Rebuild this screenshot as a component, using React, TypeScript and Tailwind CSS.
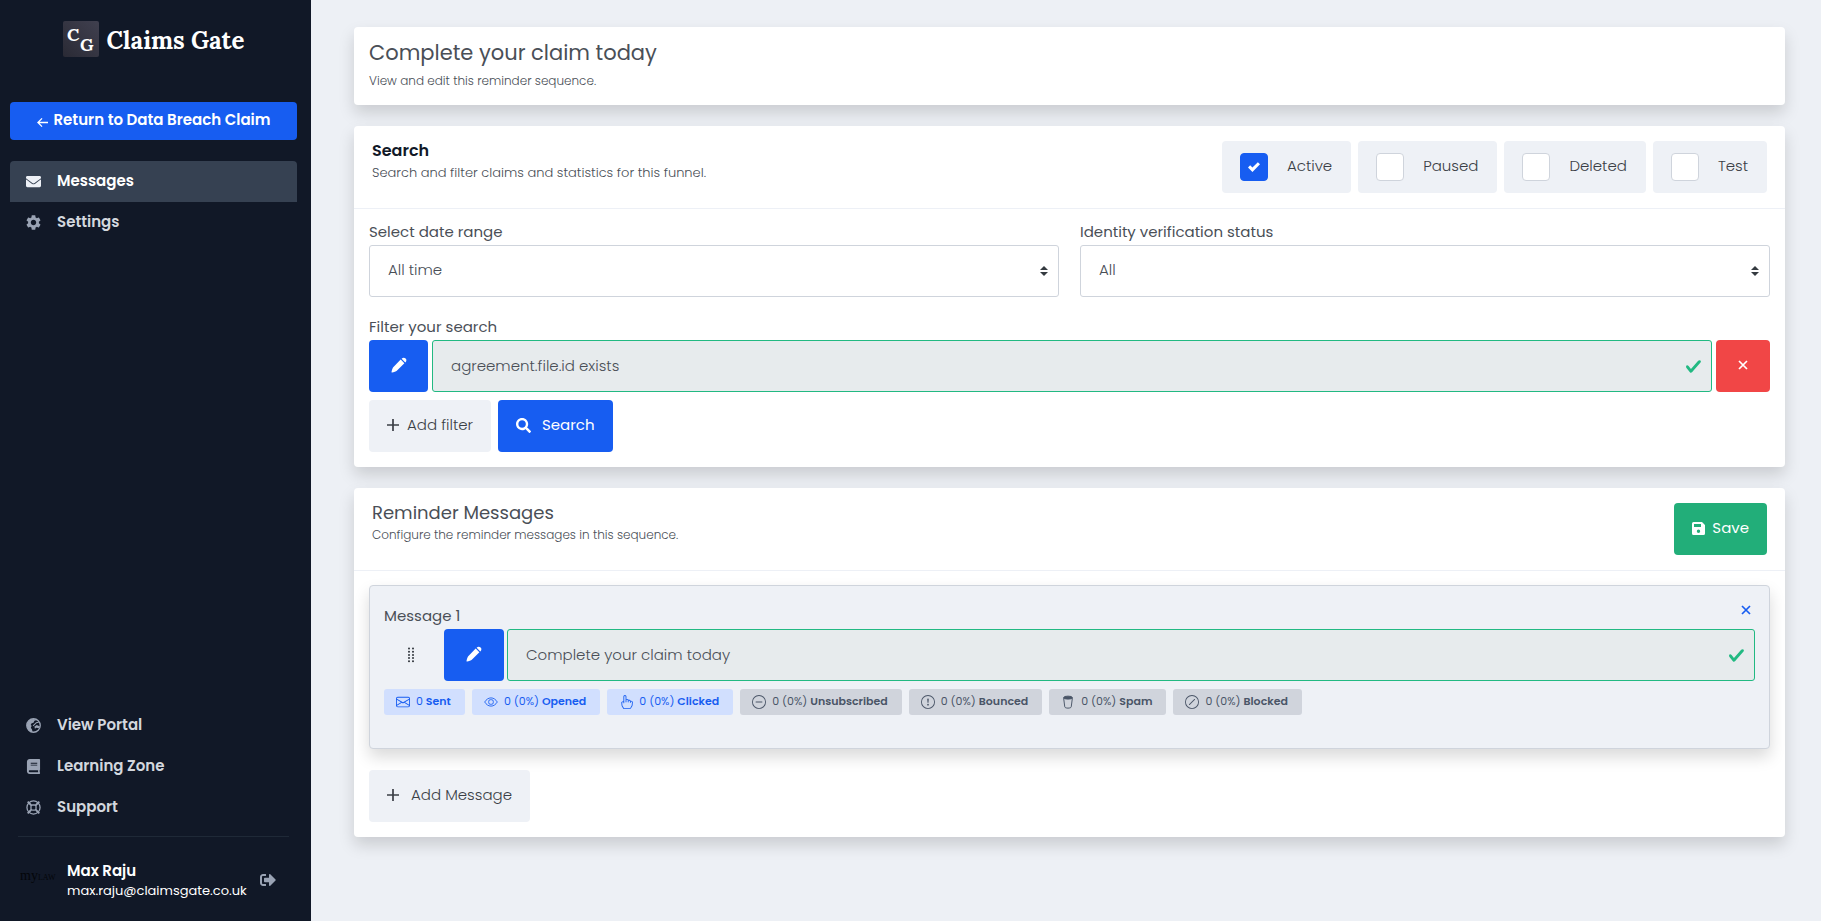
import React, { ReactNode } from 'react';
import { FaSearch, FaSignOutAlt, FaEnvelope, FaBook } from 'react-icons/fa';
import { BsEnvelope, BsHandIndex, BsDashCircle, BsExclamationCircle, BsSlashCircle } from 'react-icons/bs';

const btn = 'inline-flex h-[52px] items-center justify-center rounded pb-[2px] text-[15px]';
const card = 'rounded bg-white shadow-[0_8px_16px_rgba(0,0,0,0.15)]';

const topLinks = [
  { label: 'Messages', icon: FaEnvelope, active: true },
  { label: 'Settings', icon: Gear, active: false },
];

const bottomLinks = [
  { label: 'View Portal', icon: Globe },
  { label: 'Learning Zone', icon: FaBook },
  { label: 'Support', icon: LifeRing },
];

const statuses = [
  { id: 'active', label: 'Active', checked: true },
  { id: 'paused', label: 'Paused', checked: false },
  { id: 'deleted', label: 'Deleted', checked: false },
  { id: 'test', label: 'Test', checked: false },
];

const stats = [
  { icon: BsEnvelope, value: '0', label: 'Sent', primary: true },
  { icon: Eye, value: '0 (0%)', label: 'Opened', primary: true },
  { icon: BsHandIndex, value: '0 (0%)', label: 'Clicked', primary: true },
  { icon: BsDashCircle, value: '0 (0%)', label: 'Unsubscribed', primary: false },
  { icon: BsExclamationCircle, value: '0 (0%)', label: 'Bounced', primary: false },
  { icon: Bin, value: '0 (0%)', label: 'Spam', primary: false },
  { icon: BsSlashCircle, value: '0 (0%)', label: 'Blocked', primary: false },
];

export default function App() {
  return (
    <div className="flex min-h-screen bg-[#edf0f5] font-['Poppins',Inter,sans-serif] text-[15px] text-[#4a4f57]">
      <Sidebar />
      <main className="flex min-w-0 flex-1 flex-col gap-[21px] pt-[27px] pr-9 pb-12 pl-[43px]">
        <section className={`${card} px-[15px] pt-3 pb-[15px]`}>
          <h1 className="text-[21px] leading-7">Complete your claim today</h1>
          <p className="mt-1 text-xs leading-[19px] font-light">View and edit this reminder sequence.</p>
        </section>
        <SearchCard />
        <MessagesCard />
      </main>
    </div>
  );
}

function Sidebar() {
  return (
    <aside className="flex w-[311px] shrink-0 flex-col bg-[#111827] px-[10px]">
      <div className="mt-[21px] flex h-9 items-center justify-center gap-2 pr-1">
        <Logo />
        <span className="pt-[3px] font-['Lora','DejaVu_Serif',serif] text-2xl font-bold text-white">Claims Gate</span>
      </div>
      <a href="#" className="mt-[45px] mr-1 flex h-[38px] items-center justify-center gap-[6px] rounded bg-[#175df1] pb-px text-[15px] font-semibold text-white">
        <ArrowLeft />
        Return to Data Breach Claim
      </a>
      <nav className="mt-[21px] mr-1">
        {topLinks.map((l) => (
          <a key={l.label} href="#" className={`flex h-[41px] items-center gap-4 rounded-t px-4 font-semibold ${l.active ? 'bg-[#364152] text-white' : 'text-[#d3d7de]'}`}>
            <l.icon className={`size-[15px] ${l.active ? 'text-[#edf0f6]' : 'text-[#9aa3b4]'}`} />
            {l.label}
          </a>
        ))}
      </nav>
      <nav className="mt-auto mr-1">
        {bottomLinks.map((l) => (
          <a key={l.label} href="#" className="flex h-[41px] items-center gap-4 px-4 font-semibold text-[#d3d7de]">
            <l.icon className="size-[15px] text-[#9aa3b4]" />
            {l.label}
          </a>
        ))}
      </nav>
      <div className="mx-2 mt-2 mr-3 border-t border-[#1f2937]" />
      <div className="flex h-[84px] items-center pt-[2px] pl-[10px]">
        <span className="w-[47px] pb-2 font-['Liberation_Serif',serif] text-sm text-[#04060a]">my<span className="text-[8px]">LAW</span></span>
        <div className="flex-1">
          <p className="leading-[21px] font-semibold text-white">Max Raju</p>
          <p className="text-[13px] leading-5 text-white">max.raju@claimsgate.co.uk</p>
        </div>
        <button aria-label="Sign out" className="mr-[25px] text-[#9aa3b4]"><FaSignOutAlt className="size-4" /></button>
      </div>
    </aside>
  );
}

function SearchCard() {
  return (
    <section className={card}>
      <div className="flex items-start justify-between border-b border-[#edf0f6] px-[18px] py-[15px]">
        <div>
          <h2 className="text-base leading-5 font-semibold text-[#111827]">Search</h2>
          <p className="text-[13px] leading-6 font-light">Search and filter claims and statistics for this funnel.</p>
        </div>
        <div className="flex gap-[7px]">
          {statuses.map((s) => (
            <label key={s.id} htmlFor={s.id} className="flex h-[52px] items-center gap-[19px] rounded bg-[#eef1f6] pr-[19px] pl-[18px] font-light text-[#3b3f46]">
              <span className="grid size-7">
                <input id={s.id} type="checkbox" defaultChecked={s.checked} className="peer col-start-1 row-start-1 size-7 appearance-none rounded border border-[#cfd4dc] bg-white checked:border-[#175df1] checked:bg-[#175df1]" />
                <svg viewBox="0 0 8 8" fill="currentColor" className="pointer-events-none col-start-1 row-start-1 hidden size-3 place-self-center text-white peer-checked:block">
                  <path d="M6.564.75l-3.59 3.612-1.538-1.55L0 4.26l2.974 2.99L8 2.193z" />
                </svg>
              </span>
              <span className="pb-[2px]">{s.label}</span>
            </label>
          ))}
        </div>
      </div>
      <div className="px-[15px] pt-3 pb-[15px]">
        <div className="grid grid-cols-2 gap-[21px]">
          <SelectField id="range" label="Select date range" value="All time" />
          <SelectField id="identity" label="Identity verification status" value="All" />
        </div>
        <FieldLabel id="filter" className="mt-[19px]">Filter your search</FieldLabel>
        <div className="flex gap-1">
          <button aria-label="Edit filter" className={`${btn} w-[59px] bg-[#175df1] text-white`}><Pencil /></button>
          <ValidInput id="filter" value="agreement.file.id exists" />
          <button aria-label="Remove filter" className={`${btn} w-[54px] bg-[#f14646] text-white`}><Cross /></button>
        </div>
        <div className="mt-2 flex gap-[7px]">
          <button className={`${btn} gap-2 bg-[#eef1f6] px-[18px] font-light text-[#3b3f46]`}><Plus />Add filter</button>
          <button className={`${btn} gap-[11px] bg-[#175df1] px-[18px] text-white`}><FaSearch className="size-[15px]" />Search</button>
        </div>
      </div>
    </section>
  );
}

function MessagesCard() {
  return (
    <section className={card}>
      <div className="flex items-start justify-between border-b border-[#edf0f6] px-[18px] py-[15px]">
        <div>
          <h2 className="text-lg leading-5">Reminder Messages</h2>
          <p className="text-xs leading-6 font-light">Configure the reminder messages in this sequence.</p>
        </div>
        <button className={`${btn} gap-[7px] bg-[#22ae79] px-[18px] text-white`}><Save />Save</button>
      </div>
      <div className="px-[15px] pt-[14px] pb-[15px]">
        <article className="rounded border border-[#cfd4dc] bg-[#eef1f6] px-[14px] pt-[15px] pb-[33px] shadow-[0_8px_16px_rgba(0,0,0,0.15)]">
          <div className="flex items-start justify-between pt-1 pr-1">
            <FieldLabel id="message-1">Message 1</FieldLabel>
            <button aria-label="Remove message" className="text-[#175df1]"><Cross /></button>
          </div>
          <div className="flex gap-[3px]">
            <div className="mr-[3px] flex w-[54px] items-center justify-center"><Grip /></div>
            <button aria-label="Edit message" className={`${btn} w-[60px] bg-[#175df1] text-white`}><Pencil /></button>
            <ValidInput id="message-1" value="Complete your claim today" />
          </div>
          <div className="mt-2 flex flex-wrap gap-[7px]">
            {stats.map((s) => (
              <span key={s.label} className={`flex h-[26px] items-center gap-[6px] rounded-[3px] pr-[14px] pb-px pl-3 text-[11px] ${s.primary ? 'bg-[#d1dffe] text-[#175df1]' : 'bg-[#d0d4dc] text-[#4a5567]'}`}>
                <s.icon className="size-[14px]" />
                <span>{s.value} <b className="font-semibold">{s.label}</b></span>
              </span>
            ))}
          </div>
        </article>
        <button className={`${btn} mt-[21px] gap-3 bg-[#eef1f6] px-[18px] font-light text-[#3b3f46]`}><Plus />Add Message</button>
      </div>
    </section>
  );
}

function FieldLabel({ id, className = '', children }: { id: string; className?: string; children: ReactNode }) {
  return <label htmlFor={id} className={`block pb-[2px] leading-[22px] ${className}`}>{children}</label>;
}

function SelectField({ id, label, value }: { id: string; label: string; value: string }) {
  return (
    <div>
      <FieldLabel id={id}>{label}</FieldLabel>
      <div className="grid">
        <select id={id} className="col-start-1 row-start-1 h-[52px] w-full appearance-none rounded-[3px] border border-[#cfd4dc] bg-white px-[18px] pb-[2px] font-light">
          <option>{value}</option>
        </select>
        <svg viewBox="0 0 4 5" className="pointer-events-none col-start-1 row-start-1 mr-[11px] h-[10px] w-2 self-center justify-self-end" fill="#343a40">
          <path d="M2 0L0 2h4zm0 5L0 3h4z" />
        </svg>
      </div>
    </div>
  );
}

function ValidInput({ id, value }: { id: string; value: string }) {
  return (
    <div className="grid flex-1">
      <input id={id} readOnly defaultValue={value} className="col-start-1 row-start-1 h-[52px] w-full rounded-[3px] border border-[#22b982] bg-[#e7ebed] px-[18px] pb-[2px] font-light" />
      <svg viewBox="0 0 8 8" className="pointer-events-none col-start-1 row-start-1 mr-[10px] size-[17px] self-center justify-self-end" fill="#22b982">
        <path d="M2.3 6.73L.6 4.53c-.4-1.04.46-1.4 1.1-.8l1.1 1.4 3.4-3.8c.6-.63 1.6-.27 1.2.7l-4 4.6c-.43.5-.8.4-1.1.1z" />
      </svg>
    </div>
  );
}

function Logo() {
  return (
    <svg viewBox="0 0 36 36" className="size-9">
      <defs>
        <linearGradient id="logo-bg" x1="0" y1="1" x2="1" y2="0">
          <stop offset="0" stopColor="#2a2a35" />
          <stop offset="1" stopColor="#40404f" />
        </linearGradient>
      </defs>
      <rect width="36" height="36" rx="2" fill="url(#logo-bg)" />
      <text x="4" y="20" fontFamily="Lora, DejaVu Serif, serif" fontSize="18" fontWeight="700" fill="#fff">C</text>
      <text x="17" y="30" fontFamily="Lora, DejaVu Serif, serif" fontSize="18" fontWeight="700" fill="#fff">G</text>
    </svg>
  );
}

function Gear({ className }: { className?: string }) {
  return (
    <svg viewBox="2 2 20 20" className={className} fill="currentColor">
      <path d="M19.140 12.940c.04-.3.06-.61.06-.94 0-.32-.02-.64-.07-.94l2.030-1.580c.18-.14.23-.41.12-.61l-1.920-3.320c-.12-.22-.37-.29-.59-.22l-2.390.96c-.5-.38-1.030-.7-1.620-.94l-.36-2.540c-.04-.24-.24-.41-.48-.41h-3.840c-.24 0-.43.17-.47.41l-.36 2.540c-.59.24-1.130.57-1.620.94l-2.390-.96c-.22-.08-.47 0-.59.22L2.740 8.870c-.12.21-.08.47.12.61l2.030 1.580c-.05.3-.09.63-.09.94s.02.64.07.94l-2.030 1.580c-.18.14-.23.41-.12.61l1.920 3.320c.12.22.37.29.59.22l2.390-.96c.5.38 1.030.7 1.620.94l.36 2.540c.05.24.24.41.48.41h3.840c.24 0 .44-.17.47-.41l.36-2.540c.59-.24 1.130-.56 1.620-.94l2.390.96c.22.08.47 0 .59-.22l1.920-3.320c.12-.22.07-.47-.12-.61zM12 15.600c-1.980 0-3.600-1.620-3.600-3.600s1.620-3.600 3.600-3.600 3.600 1.620 3.600 3.600-1.620 3.600-3.600 3.600z" />
    </svg>
  );
}

function Globe({ className }: { className?: string }) {
  return (
    <svg viewBox="0 0 16 16" className={className}>
      <circle cx="8" cy="8" r="7.2" fill="none" stroke="currentColor" strokeWidth="1.4" />
      <path fill="currentColor" d="M8 1C3.500 1 1 4.500 1 8s2.500 7 5.500 7c.5-1.500.2-2.500-.8-3.700-.8-1-.5-2.300.6-2.800L5 7.500l1-2 2-.5 1-2 2.500-1zM9 9l2.500-1.500L15 9l-1.500 2-2.500-.5-1.500 1z" />
      <path fill="none" stroke="currentColor" strokeWidth="1.1" d="M7.500 8.500L11 5l2.500-.5" />
    </svg>
  );
}

function LifeRing({ className }: { className?: string }) {
  return (
    <svg viewBox="0 0 16 16" className={className} fill="none" stroke="currentColor" strokeWidth="1.4">
      <circle cx="8" cy="8" r="7" />
      <rect x="5.300" y="5.300" width="5.400" height="5.400" rx="1.600" />
      <path strokeWidth="2" d="M1.800 1.800l3.800 3.800M14.200 1.800l-3.800 3.800M1.800 14.200l3.800-3.800M14.200 14.200l-3.800-3.800" />
    </svg>
  );
}

function Eye({ className }: { className?: string }) {
  return (
    <svg viewBox="0 0 16 16" className={className} fill="none" stroke="currentColor" strokeWidth="1">
      <path d="M.8 8C2.500 5.200 5 3.300 8 3.300S13.500 5.200 15.200 8C13.500 10.800 11 12.700 8 12.700S2.500 10.800.8 8z" />
      <rect x="5.400" y="5.400" width="5.200" height="5.200" rx="1.800" />
    </svg>
  );
}

function Bin({ className }: { className?: string }) {
  return (
    <svg viewBox="0 0 16 16" className={className} fill="none" stroke="currentColor" strokeWidth="1.1">
      <path d="M3 3.500l1.300 10c.1.900 1.600 1.500 3.700 1.500s3.600-.6 3.700-1.500l1.300-10" />
      <ellipse cx="8" cy="3" rx="5" ry="1.700" fill="currentColor" />
    </svg>
  );
}

function Pencil() {
  return (
    <svg viewBox="0 0 16 16" className="size-4" fill="currentColor">
      <path d="M9.700 2.600l3.700 3.700-7.600 7.500c-.5.500-3.200 1.600-4.700 1.800-.4 0-.6-.2-.6-.6.2-1.500 1.200-4.300 1.700-4.800zM10.600 1.700c1.300-1.300 2.900-1.200 4-.2s1.100 2.700-.3 3.900z" />
    </svg>
  );
}

function ArrowLeft() {
  return (
    <svg viewBox="0 0 12 12" className="mt-1 size-[11px]" fill="none" stroke="currentColor" strokeWidth="1.4">
      <path d="M12 6H1.500M5.500 1.500L1 6l4.500 4.500" />
    </svg>
  );
}

function Plus() {
  return (
    <svg viewBox="0 0 12 12" className="size-3" fill="none" stroke="currentColor" strokeWidth="1.7">
      <path d="M6 0v12M0 6h12" />
    </svg>
  );
}

function Cross() {
  return (
    <svg viewBox="0 0 10 10" className="size-[10px]" fill="none" stroke="currentColor" strokeWidth="1.7">
      <path d="M1 1l8 8M9 1L1 9" />
    </svg>
  );
}

function Save() {
  return (
    <svg viewBox="0 0 13 13" className="size-[13px]" fill="currentColor">
      <path fillRule="evenodd" d="M1.500 0H10l3 3v8.500a1.500 1.500 0 0 1-1.500 1.500h-10A1.500 1.500 0 0 1 0 11.500v-10A1.500 1.500 0 0 1 1.500 0zM2 2v3h7V2zM6.500 7.500a1.700 1.700 0 1 0 0 3.400 1.700 1.700 0 0 0 0-3.400z" />
    </svg>
  );
}

function Grip() {
  return (
    <svg viewBox="0 0 6 16" className="h-4 w-[6px]" fill="#2f343b">
      {[0, 1, 2, 3, 4].map((r) => (
        <g key={r}>
          <circle cx="1" cy={1.5 + r * 3.2} r="1" />
          <circle cx="5" cy={1.5 + r * 3.2} r="1" />
        </g>
      ))}
    </svg>
  );
}
